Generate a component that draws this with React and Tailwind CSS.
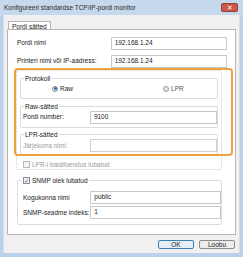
import React from "react";

const font = { fontFamily: '"Liberation Sans", Arial, sans-serif' };

function Group({ title, className = "", children }) {
  return (
    <div className={"relative border border-[#dcdcdc] rounded-[2px] " + className}>
      {title && (
        <div className="absolute -top-[5px] left-[3px] bg-white px-[1px] leading-[9px] text-[6.5px] text-[#222] whitespace-nowrap">
          {title}
        </div>
      )}
      {children}
    </div>
  );
}

function Input({ value = "", className = "" }) {
  return (
    <div
      className={
        "h-[13px] border border-[#c8c8c8] bg-white flex items-center pl-[3px] text-[6.5px] leading-none " +
        className
      }
    >
      {value}
    </div>
  );
}

export default function App() {
  return (
    <div
      className="w-[243px] h-[257px] bg-[#b9d1ea] flex flex-col overflow-hidden text-[#222] whitespace-nowrap"
      style={font}
    >
      {/* title bar */}
      <div className="h-[15px] flex items-center justify-between bg-[#c6d8ec] px-[4px]">
        <span className="text-[6.5px] leading-none text-[#2a2a2a] pt-[1px]">
          Konfigureeri standardse TCP/IP-pordi monitor
        </span>
        <div className="w-[17px] h-[9px] mr-[1px] rounded-[2px] bg-[#c9574b] border border-[#9a3f36] flex items-center justify-center text-white text-[7px] leading-none">
          ✕
        </div>
      </div>
      {/* client */}
      <div className="flex-1 mx-[3px] mb-[4px] bg-[#f0f0f0] border-l border-r border-[#d6dde6] flex flex-col px-[3px] pt-[5px]">
        {/* tab header */}
        <div className="flex">
          <div className="ml-[1px] h-[9px] px-[3px] bg-white border border-b-0 border-[#b5b5b5] text-[6.5px] leading-[9px] relative top-[1px]">
            Pordi sätted
          </div>
        </div>
        {/* tab panel */}
        <div className="h-[206px] bg-white border border-[#b5b5b5] relative px-[8px] pt-[6px]">
          <div className="flex items-center h-[14px]">
            <span className="w-[96px] text-[6.5px] pl-[1px]">Pordi nimi</span>
            <Input value="192.168.1.24" className="w-[118px]" />
          </div>
          <div className="flex items-center h-[14px] mt-[4px]">
            <span className="w-[96px] text-[6.5px] pl-[1px]">Printeri nimi või IP-aadress:</span>
            <Input value="192.168.1.24" className="w-[118px]" />
          </div>

          {/* big group behind orange */}
          <div className="mt-[2px] mr-[5px] border border-[#e6e6e6] rounded-[2px] h-[100px] relative">
            <div className="px-[2px] pt-[7px]">
              <Group title="Protokoll" className="h-[21px] mx-[1px]">
                <div className="flex items-center h-full text-[6.5px]">
                  <div className="ml-[31px] flex items-center gap-[2px]">
                    <span className="w-[6px] h-[6px] rounded-full border border-[#8a8a8a] bg-[#e8eef4] flex items-center justify-center">
                      <span className="w-[3px] h-[3px] rounded-full bg-[#2d6cb5]" />
                    </span>
                    <span>Raw</span>
                  </div>
                  <div className="ml-[90px] flex items-center gap-[2px] text-[#555]">
                    <span className="w-[6px] h-[6px] rounded-full border border-[#9a9a9a] bg-[#e4e4e4]" />
                    <span>LPR</span>
                  </div>
                </div>
              </Group>
              <Group title="Raw-sätted" className="h-[22px] mt-[7px] mx-[1px]">
                <div className="flex items-center h-full">
                  <span className="w-[71px] text-[6.5px] pl-[2px]">Pordi number:</span>
                  <Input value="9100" className="w-[131px]" />
                </div>
              </Group>
              <Group title="LPR-sätted" className="h-[21px] mt-[6px] mx-[1px]">
                <div className="flex items-center h-full pt-[2px]">
                  <span className="w-[71px] text-[6.5px] pl-[2px] text-[#9a9a9a]">Järjekorra nimi:</span>
                  <Input value="" className="w-[131px] border-[#d0d0d0]" />
                </div>
              </Group>
            </div>
            <div className="flex items-center gap-[2px] ml-[6px] mt-[5px] text-[6.5px] text-[#9a9a9a]">
              <span className="w-[7px] h-[7px] border border-[#b8b8b8] bg-[#f4f4f4]" />
              <span>LPR-i baidiloendus lubatud</span>
            </div>
          </div>

          {/* orange highlight */}
          <div className="absolute left-[6px] top-[38px] w-[219px] h-[88px] border-2 border-[#f0a03c] rounded-[4px] pointer-events-none" />

          {/* SNMP group */}
          <div className="mt-[10px] mr-[5px] ml-[1px] border border-[#dcdcdc] rounded-[2px] h-[45px] relative">
            <div className="absolute -top-[5px] left-[4px] bg-white px-[1px] flex items-center gap-[2px] text-[6.5px] leading-[9px]">
              <span className="w-[7px] h-[7px] border border-[#8a8a8a] bg-[#eef2f6] flex items-center justify-center text-[6px] leading-none text-[#2d5a9a]">
                ✓
              </span>
              <span>SNMP olek lubatud</span>
            </div>
            <div className="flex items-center h-[13px] mt-[10px]">
              <span className="w-[73px] text-[6.5px] pl-[5px]">Kogukonna nimi</span>
              <Input value="public" className="w-[132px]" />
            </div>
            <div className="flex items-center h-[13px] mt-[2px]">
              <span className="w-[73px] text-[6.5px] pl-[5px]">SNMP-seadme indeks:</span>
              <Input value="1" className="w-[132px]" />
            </div>
          </div>
        </div>
        {/* buttons */}
        <div className="flex justify-end gap-[5px] mt-[5px] pr-[1px]">
          <div className="w-[36px] h-[9px] border border-[#3c7fb1] rounded-[2px] bg-[#e5eef7] text-[6.5px] leading-[7px] flex items-center justify-center">
            OK
          </div>
          <div className="w-[36px] h-[9px] border border-[#8c8c8c] rounded-[2px] bg-[#ececec] text-[6.5px] leading-[7px] flex items-center justify-center">
            Loobu
          </div>
        </div>
      </div>
    </div>
  );
}
